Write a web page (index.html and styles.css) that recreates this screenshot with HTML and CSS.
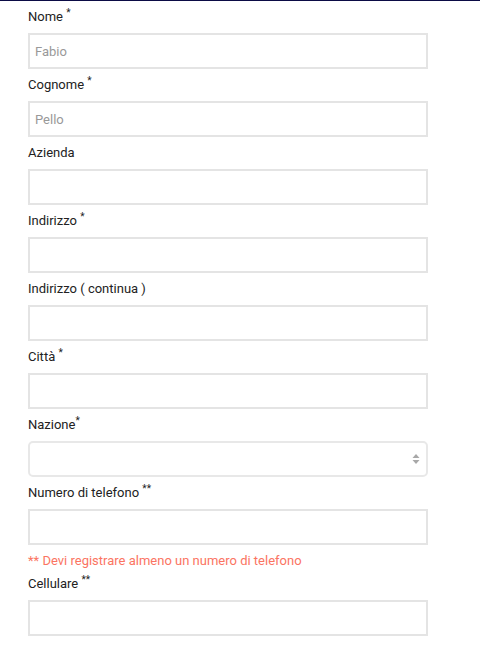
FILE: index.html
```html
<!DOCTYPE html>
<html lang="it">
<head>
<meta charset="utf-8">
<title>Registrazione</title>
<link rel="stylesheet" href="styles.css">
</head>
<body>
<form class="form">
  <div class="field">
    <label class="label">Nome <sup class="req">*</sup></label>
    <input class="input" type="text" placeholder="Fabio">
  </div>
  <div class="field">
    <label class="label">Cognome <sup class="req">*</sup></label>
    <input class="input" type="text" placeholder="Pello">
  </div>
  <div class="field">
    <label class="label">Azienda</label>
    <input class="input" type="text">
  </div>
  <div class="field">
    <label class="label">Indirizzo <sup class="req">*</sup></label>
    <input class="input" type="text">
  </div>
  <div class="field">
    <label class="label">Indirizzo ( continua )</label>
    <input class="input" type="text">
  </div>
  <div class="field">
    <label class="label">Città <sup class="req">*</sup></label>
    <input class="input" type="text">
  </div>
  <div class="field">
    <label class="label">Nazione<sup class="req">*</sup></label>
    <div class="select-wrap">
      <select class="select"><option></option></select>
      <svg class="select-arrows" width="8" height="12" viewBox="0 0 8 12"><path d="M4 1 L7.5 5 L0.5 5 Z M4 11 L7.5 7 L0.5 7 Z" fill="#a8a8a8"/></svg>
    </div>
  </div>
  <div class="field">
    <label class="label">Numero di telefono <sup class="req">**</sup></label>
    <input class="input" type="text">
  </div>
  <p class="error">** Devi registrare almeno un numero di telefono</p>
  <div class="field">
    <label class="label">Cellulare <sup class="req">**</sup></label>
    <input class="input" type="text">
  </div>
</form>
</body>
</html>
```
FILE: styles.css
```css
html, body {
  margin: 0;
  padding: 0;
  background: #fff;
}
body {
  border-top: 1px solid #0b0b45;
  font-family: Roboto, "Liberation Sans", sans-serif;
  font-size: 13px;
  color: #222;
}
.form {
  width: 400px;
  padding: 6px 0 0 28px;
  display: flex;
  flex-direction: column;
}
.field {
  display: flex;
  flex-direction: column;
  margin-bottom: 6px;
}
.label {
  line-height: 20px;
  height: 20px;
  margin-bottom: 6px;
  color: #222;
}
.req {
  font-size: 10px;
  vertical-align: 0;
  position: relative;
  top: -5px;
  line-height: 0;
}
.input {
  box-sizing: border-box;
  width: 400px;
  height: 36px;
  margin: 0;
  border: 2px solid #e4e4e4;
  border-radius: 0;
  padding: 0 5px;
  font-family: inherit;
  font-size: 13px;
  color: #333;
  background: #fff;
  outline: none;
}
.input::placeholder {
  color: #999;
}
.select-wrap {
  position: relative;
  width: 400px;
  height: 36px;
}
.select {
  box-sizing: border-box;
  width: 400px;
  height: 36px;
  margin: 0;
  border: 2px solid #e8e8e8;
  border-radius: 5px;
  background: #fff;
  appearance: none;
  -webkit-appearance: none;
  font-family: inherit;
  font-size: 13px;
  outline: none;
}
.select-arrows {
  position: absolute;
  right: 8px;
  top: 12px;
}
.error {
  margin: 0 0 3px 0;
  line-height: 20px;
  color: #fb7462;
}
```
